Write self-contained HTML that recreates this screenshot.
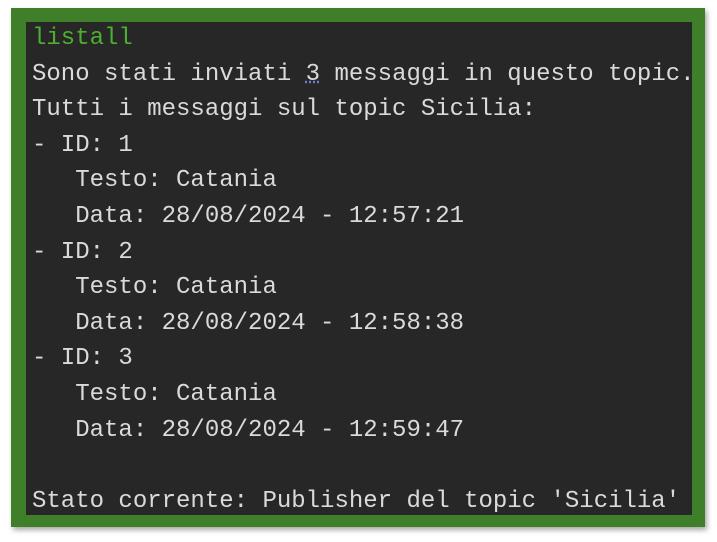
<!DOCTYPE html>
<html><head><style>
html,body{margin:0;padding:0;background:#fff;width:717px;height:542px;overflow:hidden}
.frame{position:absolute;left:11px;top:8px;width:694px;height:519px;background:#3f7f2a;box-shadow:2px 3px 5px rgba(0,0,0,.35)}
.inner{position:absolute;left:15px;top:14px;width:666px;height:493px;background:#272727;overflow:hidden}
pre{margin:0;position:absolute;left:6px;top:-1px;font-family:"Liberation Mono",monospace;font-size:24px;line-height:35.6px;color:#dadada;white-space:pre}
.g{color:#4caf2f}
.u{text-decoration:underline dotted #6a7fd8}
</style></head><body>
<div class="frame"><div class="inner"><pre><span class="g">listall</span>
Sono stati inviati <span class="u">3</span> messaggi in questo topic.
Tutti i messaggi sul topic Sicilia:
- ID: 1
   Testo: Catania
   Data: 28/08/2024 - 12:57:21
- ID: 2
   Testo: Catania
   Data: 28/08/2024 - 12:58:38
- ID: 3
   Testo: Catania
   Data: 28/08/2024 - 12:59:47

Stato corrente: Publisher del topic 'Sicilia'</pre></div></div>
</body></html>
